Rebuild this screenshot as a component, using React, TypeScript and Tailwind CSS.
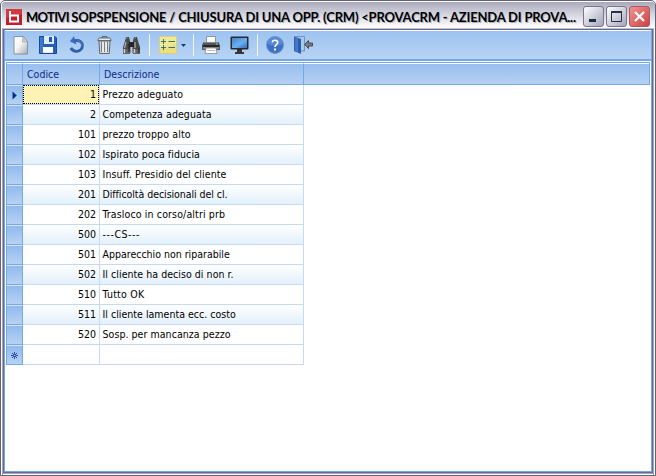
import React from "react";

const rows: { code: string; text: string; track: string }[] = [
  { code: "1", text: "Prezzo adeguato", track: "tracking-[0.15px]" },
  { code: "2", text: "Competenza adeguata", track: "tracking-[0.08px]" },
  { code: "101", text: "prezzo troppo alto", track: "tracking-[0.12px]" },
  { code: "102", text: "Ispirato poca fiducia", track: "tracking-[0.08px]" },
  { code: "103", text: "Insuff. Presidio del cliente", track: "tracking-[0.12px]" },
  { code: "201", text: "Difficoltà decisionali del cl.", track: "tracking-[-0.05px]" },
  { code: "202", text: "Trasloco in corso/altri prb", track: "tracking-[0.13px]" },
  { code: "500", text: "---CS---", track: "tracking-[0.55px]" },
  { code: "501", text: "Apparecchio non riparabile", track: "tracking-[0px]" },
  { code: "502", text: "Il cliente ha deciso di non r.", track: "tracking-[0.05px]" },
  { code: "510", text: "Tutto OK", track: "tracking-[0.25px]" },
  { code: "511", text: "Il cliente lamenta ecc. costo", track: "tracking-[0.02px]" },
  { code: "520", text: "Sosp. per mancanza pezzo", track: "tracking-[0.06px]" },
];

function NewIcon() {
  return (
    <svg width="16" height="19" viewBox="0 0 16 19">
      <defs>
        <linearGradient id="page" x1="0" y1="0" x2="1" y2="1">
          <stop offset="0" stopColor="#fff" /><stop offset=".45" stopColor="#f4f5f5" /><stop offset="1" stopColor="#a9adb1" />
        </linearGradient>
      </defs>
      <path d="M1 .5H10L14.5 5.5V18H1Z" fill="url(#page)" stroke="#7f8b97" strokeWidth=".9" />
      <path d="M10 .5L9.5 6L14.5 5.8Z" fill="#cdd2d5" stroke="#8d969c" strokeWidth=".6" />
    </svg>
  );
}
function SaveIcon() {
  return (
    <svg width="18" height="18" viewBox="0 0 18 18">
      <path d="M.5 .5H16L17.5 2V17.5H.5Z" fill="#265fb5" stroke="#174a9c" />
      <path d="M1 1H4V17H1Z" fill="#3c78cb" />
      <path d="M5 0H15V8H5Z" fill="#dceafa" />
      <path d="M10 1H13V6H10Z" fill="#2059ae" />
      <path d="M4 11H14V17H4Z" fill="#fff" />
      <path d="M4 16H14V17H4Z" fill="#dfe8f3" />
    </svg>
  );
}
function UndoIcon() {
  return (
    <svg width="16" height="18" viewBox="0 0 16 18">
      <path d="M5.5 4.7C11 3.8 13.6 6.5 13.4 10C13.1 13.3 10.5 15.5 7.2 15.3C4.6 15.1 2.8 13.8 1.8 12" fill="none" stroke="#315fa9" strokeWidth="2.8" />
      <path d="M8.5 4.6C12 5.1 13 8 12.8 10.3" fill="none" stroke="#5c8bd0" strokeWidth="1" />
      <path d="M.8 5.2L5 .3L7.5 8.5Z" fill="#3a6cb8" />
    </svg>
  );
}
function TrashIcon() {
  return (
    <svg width="15" height="19" viewBox="0 0 15 19">
      <path d="M5 2V.7H10V2" fill="none" stroke="#555b60" />
      <path d="M.7 4.5L2 2H13L14.3 4.5Z" fill="#e6e8ea" stroke="#5c6267" strokeWidth=".9" />
      <path d="M2 5H13L12.3 17.5H2.7Z" fill="#d8dbde" stroke="#62686e" />
      <path d="M4.5 6V16M7.5 6V16M10.5 6V16" stroke="#777d82" strokeWidth="1.1" />
      <path d="M6 6V16M9 6V16" stroke="#fff" />
    </svg>
  );
}
function FindIcon() {
  return (
    <svg width="19" height="19" viewBox="0 0 19 19">
      <path d="M4 1H7L8 5L8.5 8V17H1V11L3 5Z" fill="#4b4b4b" />
      <path d="M12 1H15L16 5L18 11V17H10.5V8L11 5Z" fill="#484848" />
      <path d="M7 6H12V11H7Z" fill="#252525" />
      <path d="M4 2H5.5M12.5 2H14" stroke="#999" />
      <path d="M4 6L2.5 12M13 6V12" stroke="#b1b1b1" strokeWidth="1.2" />
      <path d="M1 13.5H8V18H1ZM11 13.5H18V18H11Z" fill="#656565" />
      <path d="M2.5 13V17M12.5 13V17" stroke="#d4d2ce" strokeWidth="1.4" />
      <path d="M7 8V16M17 12V17" stroke="#1e1e1e" />
    </svg>
  );
}
function ListIcon() {
  return (
    <svg width="18" height="18" viewBox="0 0 18 18">
      <path d="M.5 .5H17.5V17.5H.5Z" fill="#f0e893" stroke="#d9d17d" />
      <path d="M1 13L17 8V17H1Z" fill="#e2da74" opacity=".6" />
      <path d="M2 5.5H7M4.5 3V8M2 11.5H7M4.5 9V14M9.5 5.5H16M9.5 11.5H16" stroke="#397277" strokeWidth="1" />
    </svg>
  );
}
function PrintIcon() {
  return (
    <svg width="18" height="18" viewBox="0 0 18 18">
      <path d="M4.5 8V.5H13.5V8" fill="#fafafa" stroke="#8f9499" />
      <path d="M1.5 6H16.5L18 9V14H0V9Z" fill="#54585b" />
      <path d="M2 6.5H16" stroke="#85898c" />
      <path d="M1 9H17V11H1Z" fill="#25282b" />
      <path d="M1 12H17" stroke="#b5b8b9" />
      <path d="M4 12H14L15 17.5H3Z" fill="#fff" stroke="#777c80" strokeWidth=".7" />
      <path d="M5 14.5H13" stroke="#bbb" />
      <path d="M14 8H16" stroke="#6ee267" />
    </svg>
  );
}
function ScreenIcon() {
  return (
    <svg width="19" height="18" viewBox="0 0 19 18">
      <defs><linearGradient id="screen" x2="1" y2="1"><stop stopColor="#4283cc" /><stop offset=".55" stopColor="#6db0ef" /><stop offset="1" stopColor="#2e6fbd" /></linearGradient></defs>
      <rect x=".5" y=".5" width="18" height="13" rx="1" fill="#272b30" />
      <rect x="2" y="2" width="15" height="10" fill="url(#screen)" />
      <path d="M7 13H12V16H7Z" fill="#303236" /><path d="M5 16H14V18H5Z" fill="#36393d" />
    </svg>
  );
}
function HelpIcon() {
  return (
    <svg width="18" height="18" viewBox="0 0 18 18">
      <circle cx="9" cy="9" r="8.5" fill="#3e70c3" stroke="#7196d1" />
      <path d="M1.5 8A7.5 7.5 0 0 1 16.5 8Q9 11 1.5 8Z" fill="#6d99dc" opacity=".6" />
      <path d="M6.3 6.4C6.5 3.4 12 3.6 11.7 6.5C11.5 8.6 9 8.6 9 11" fill="none" stroke="#fff" strokeWidth="1.6" />
      <path d="M8 12.5H10V14.5H8Z" fill="#fff" />
    </svg>
  );
}
function ExitIcon() {
  return (
    <svg width="19" height="18" viewBox="0 0 19 18">
      <path d="M1 .5H10.5V15H1Z" fill="#a5cae9" stroke="#6f94bc" />
      <path d="M0 .5L7 3V18L0 15Z" fill="#2b5fad" /><path d="M1 1L4 2.3V16L1 15Z" fill="#4679c0" />
      <path d="M10.5 8.5L14.5 4.5V7H18.5V10H14.5V12.5Z" fill="#777c83" stroke="#3f454d" strokeWidth=".9" />
    </svg>
  );
}
function Divider() {
  return <div className="h-[22px] w-px shrink-0 bg-[#f1f7ff]" />;
}
function Indicator({ kind }: { kind?: "current" | "new" }) {
  return (
    <div className="flex w-[17px] shrink-0 items-center justify-center border border-[#76a8e6] border-t-[#d7e7fb] bg-linear-to-b from-[#91baec] to-[#b7d2f4]">
      {kind === "current" && <svg width="5" height="9" viewBox="0 0 5 9"><path d="M.5 .5L4.8 4.5L.5 8.5Z" fill="#0b2c93" /></svg>}
      {kind === "new" && <svg width="7" height="7" viewBox="0 0 7 7"><path d="M3.5 0V7M0 3.5H7M1 1L6 6M6 1L1 6" stroke="#183ba3" strokeWidth=".9" /><circle cx="3.5" cy="3.5" r=".8" fill="#c4daf6" /></svg>}
    </div>
  );
}
const buttonBase = "flex h-[21px] w-[21px] shrink-0 items-center justify-center rounded-[3px] border";

export default function App() {
  return (
    <div className="flex h-[476px] w-[656px] flex-col overflow-hidden rounded-t-[5px] border border-[#626180] bg-[#a9a8bd] font-['DejaVu_Sans_Condensed','DejaVu_Sans',sans-serif] text-[10.5px] text-black">
      <header className="flex h-[27px] shrink-0 items-center rounded-t-[4px] border-t border-l border-white bg-linear-to-b from-[#aaa9bb] via-[#d3d3de] via-45% to-white pt-[3px] pl-[4px]">
        <svg className="shrink-0" width="16" height="16" viewBox="0 0 16 16">
          <rect width="16" height="16" fill="#c4202b" />
          <path d="M0 0H16V5L0 9Z" fill="#dc4c50" opacity=".6" />
          <path d="M4 2V12.5H12V6.5H4" fill="none" stroke="#fff" strokeWidth="2" />
        </svg>
        <h1 className="ml-1 w-[551px] shrink-0 whitespace-nowrap font-['Lato',sans-serif] text-[13px] leading-4 font-bold tracking-[-0.19px] [text-shadow:1px_1px_0_#b0b0bd]"><span className="tracking-[-0.7px]">MOTIVI </span>SOPSPENSIONE / CHIUSURA DI UNA OPP. (CRM) &lt;PROVACRM - AZIENDA DI PROVA...</h1>
        <div className="ml-[6px] flex gap-[2px]">
          <div className={`${buttonBase} border-[#77778f] bg-linear-to-br from-white to-[#a5a5ba]`}><svg width="15" height="15"><path d="M3 10H10V13H3Z" fill="#1e2943" /></svg></div>
          <div className={`${buttonBase} border-[#77778f] bg-linear-to-br from-white to-[#a5a5ba]`}><svg width="15" height="15"><path d="M2.5 3H12.5V12.5H2.5Z" fill="none" stroke="#26304c" /><path d="M2 3H13" stroke="#26304c" strokeWidth="2" /></svg></div>
          <div className={`${buttonBase} border-[#a85b67] bg-linear-to-br from-[#ef9291] to-[#cd3e42]`}><svg width="15" height="15"><path d="M3 3L12 12M12 3L3 12" stroke="#fff" strokeWidth="2.2" /></svg></div>
        </div>
      </header>
      <main className="flex min-h-0 flex-1 border-x border-white">
        <div className="flex min-w-0 flex-1 flex-col border-x border-t border-[#a5a4ba] border-t-[#c0bfcd] bg-white">
          <div className="flex min-h-0 flex-1 flex-col border border-[#696a90]">
            <div className="flex min-h-0 flex-1 flex-col border border-t-0 border-[#73a7e9]">
              <div className="flex h-[31px] shrink-0 items-center border-t border-b-2 border-t-white border-b-[#73a7e9] bg-linear-to-b from-[#9cc3f0] to-[#b8d4f4] pl-2">
                <NewIcon /><div className="ml-[10px]"><SaveIcon /></div><div className="ml-3"><UndoIcon /></div>
                <div className="ml-3"><TrashIcon /></div><div className="ml-[10px]"><FindIcon /></div>
                <div className="ml-2"><Divider /></div><div className="ml-[9px]"><ListIcon /></div>
                <svg className="ml-[4px]" width="5" height="3"><path d="M0 0H5L2.5 3Z" fill="#173a8d" /></svg>
                <div className="ml-[7px]"><Divider /></div><div className="ml-2"><PrintIcon /></div><div className="ml-[10px]"><ScreenIcon /></div>
                <div className="ml-2"><Divider /></div><div className="ml-2"><HelpIcon /></div><div className="ml-[10px]"><ExitIcon /></div>
              </div>
              <div className="flex min-h-0 flex-1 flex-col border border-white">
                <div className="flex h-[23px] shrink-0 border border-[#73a7e9] bg-linear-to-b from-[#96beee] to-[#b5d1f3] leading-[20px] text-[#10298a]">
                  <div className="w-4 shrink-0 border-t border-r border-t-white border-r-[#76a8e6]" />
                  <div className="w-[77px] shrink-0 border-t border-r border-t-white border-r-[#76a8e6] pl-[4px]">Codice</div>
                  <div className="w-[204px] shrink-0 border-t border-r border-t-white border-r-[#76a8e6] pl-[4px] tracking-[0.05px]">Descrizione</div>
                  <div className="flex-1 border-t border-white" />
                </div>
                {rows.map((row, i) => (
                  <div key={row.code} className="flex h-5 w-[298px] shrink-0 leading-[18px]">
                    <Indicator kind={i === 0 ? "current" : undefined} />
                    <div className={`w-[77px] shrink-0 border-r border-b border-[#c6daf8] ${i % 2 ? "bg-linear-to-b from-white to-[#e3f0fb]" : ""}`}>
                      <div className={`h-[19px] text-right ${i === 0 ? "border border-dotted border-black bg-[#fff2b5] pr-[2px] leading-[16px]" : "pr-[3px]"}`}>{row.code}</div>
                    </div>
                    <div className={`w-[204px] shrink-0 border-r border-b border-[#c6daf8] pl-[2.5px] whitespace-nowrap ${row.track} ${i % 2 ? "bg-linear-to-b from-white to-[#e3f0fb]" : ""}`}>{row.text}</div>
                  </div>
                ))}
                <div className="flex h-5 w-[298px] shrink-0">
                  <Indicator kind="new" />
                  <div className="w-[77px] shrink-0 border-r border-b border-[#c6daf8]" />
                  <div className="w-[204px] shrink-0 border-r border-b border-[#c6daf8]" />
                </div>
              </div>
            </div>
          </div>
          <div className="h-px bg-[#a5a4ba]" /><div className="h-px bg-white" />
        </div>
      </main>
    </div>
  );
}
